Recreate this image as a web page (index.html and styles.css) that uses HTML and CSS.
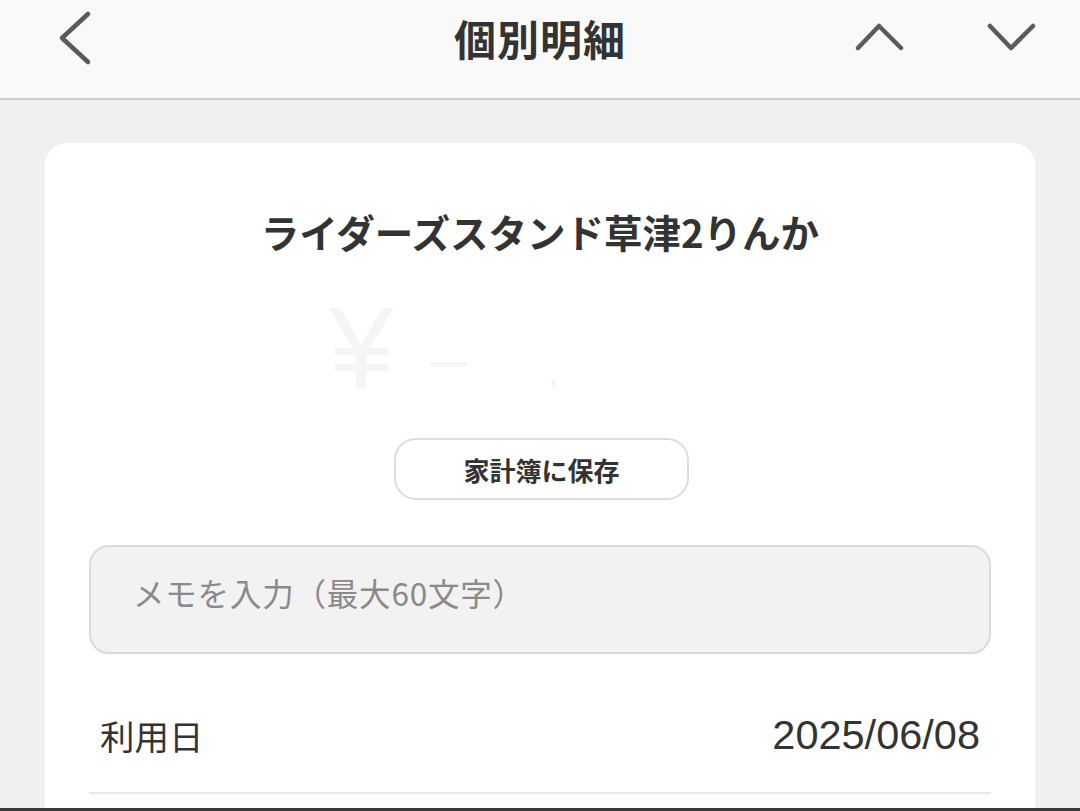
FILE: index.html
```html
<!DOCTYPE html>
<html lang="ja">
<head>
<meta charset="utf-8">
<title>個別明細</title>
<link rel="stylesheet" href="styles.css">
</head>
<body>
<div class="page">
  <header class="topbar">
    <div class="topbar-left">
      <svg class="icon-back" width="40" height="60" viewBox="0 0 40 60"><polyline points="33,6 7,30 33,54" /></svg>
    </div>
    <h1 class="topbar-title">個別明細</h1>
    <div class="topbar-right">
      <svg class="icon-nav" width="50" height="34" viewBox="0 0 50 34"><polyline points="3,27 24,5 46,27" /></svg>
      <svg class="icon-nav" width="50" height="34" viewBox="0 0 50 34"><polyline points="3,5 24,27 46,5" /></svg>
    </div>
  </header>
  <main class="content">
    <section class="card">
      <h2 class="shop-name">ライダーズスタンド草津2りんか</h2>
      <div class="amount">
        <span class="yen">¥</span>
        <span class="amount-dash"></span>
        <span class="amount-comma">,</span>
      </div>
      <button class="save-btn" type="button">家計簿に保存</button>
      <div class="memo">
        <input class="memo-input" type="text" placeholder="メモを入力（最大60文字）">
      </div>
      <div class="detail-row">
        <span class="detail-label">利用日</span>
        <span class="detail-value">2025/06/08</span>
      </div>
    </section>
  </main>
  <div class="bottom-edge"></div>
</div>
</body>
</html>
```
FILE: styles.css
```css
* { box-sizing: border-box; }
html, body {
  margin: 0;
  padding: 0;
  height: 811px;
  overflow: hidden;
}
body {
  background: #f0f0f0;
  font-family: "Noto Sans CJK JP", "Noto Sans", sans-serif;
  color: #333;
}
.page {
  height: 811px;
  display: flex;
  flex-direction: column;
}
.topbar {
  flex: none;
  height: 100px;
  background: #f9f9f9;
  border-bottom: 2px solid #d0d0d0;
  display: grid;
  grid-template-columns: 1fr auto 1fr;
  align-items: center;
  padding-bottom: 22px;
}
.topbar-left {
  display: flex;
  padding-left: 55px;
}
.topbar-right {
  display: flex;
  justify-content: flex-end;
  gap: 82px;
  padding-right: 43px;
}
.icon-back polyline,
.icon-nav polyline {
  fill: none;
  stroke: #5a5a5a;
  stroke-width: 4.5;
  stroke-linecap: round;
  stroke-linejoin: round;
}
.topbar-title {
  margin: 0;
  font-size: 42px;
  line-height: 60px;
  font-weight: 700;
  color: #333;
  letter-spacing: 1px;
}
.content {
  flex: 1;
  overflow: hidden;
  padding: 43px 45px 0;
}
.card {
  background: #fff;
  border-radius: 22px;
  min-height: 800px;
  padding-top: 62px;
  display: flex;
  flex-direction: column;
  align-items: stretch;
}
.shop-name {
  margin: 0;
  text-align: center;
  font-size: 38.5px;
  line-height: 52px;
  font-weight: 700;
  color: #333;
}
.amount {
  height: 181px;
  display: flex;
  align-items: flex-start;
  padding-left: 284px;
  padding-top: 33px;
  color: #f5f5f5;
}
.yen {
  font-family: "Liberation Sans", sans-serif;
  font-size: 116px;
  line-height: 116px;
}
.amount-dash {
  width: 37px;
  height: 5px;
  background: #f6f6f6;
  margin-left: 36px;
  margin-top: 72px;
}
.amount-comma {
  font-family: "Liberation Sans", sans-serif;
  font-size: 34px;
  margin-left: 82px;
  margin-top: 62px;
  color: #f2f2f2;
}
.save-btn {
  align-self: center;
  width: 295px;
  height: 62px;
  background: #fff;
  border: 2px solid #dcdcdc;
  border-radius: 22px;
  font-family: "Noto Sans CJK JP", sans-serif;
  font-size: 26px;
  font-weight: 700;
  color: #333;
  padding: 0;
  margin-left: 3px;
}
.memo {
  margin: 45px 44px 0;
  height: 109px;
  background: #f2f2f2;
  border: 2px solid #dadada;
  border-radius: 20px;
  display: flex;
  align-items: center;
  padding-left: 42px;
}
.memo-input {
  flex: 1;
  border: 0;
  background: transparent;
  font-family: "Noto Sans CJK JP", sans-serif;
  font-size: 31.5px;
  letter-spacing: 0.8px;
  color: #333;
  outline: none;
  padding: 0 0 15px;
}
.memo-input::placeholder {
  color: #8a8a8a;
}
.detail-row {
  margin: 0 44px;
  padding: 58px 11px 35px;
  border-bottom: 2px solid #e8e8e8;
  display: flex;
  justify-content: space-between;
  align-items: center;
  height: 140px;
}
.detail-label {
  font-size: 34.5px;
  line-height: 44px;
  color: #333;
}
.detail-value {
  font-family: "Liberation Sans", sans-serif;
  font-size: 41.5px;
  line-height: 44px;
  color: #333;
}
.bottom-edge {
  flex: none;
  height: 3px;
  background: #3a3a3a;
}
```
